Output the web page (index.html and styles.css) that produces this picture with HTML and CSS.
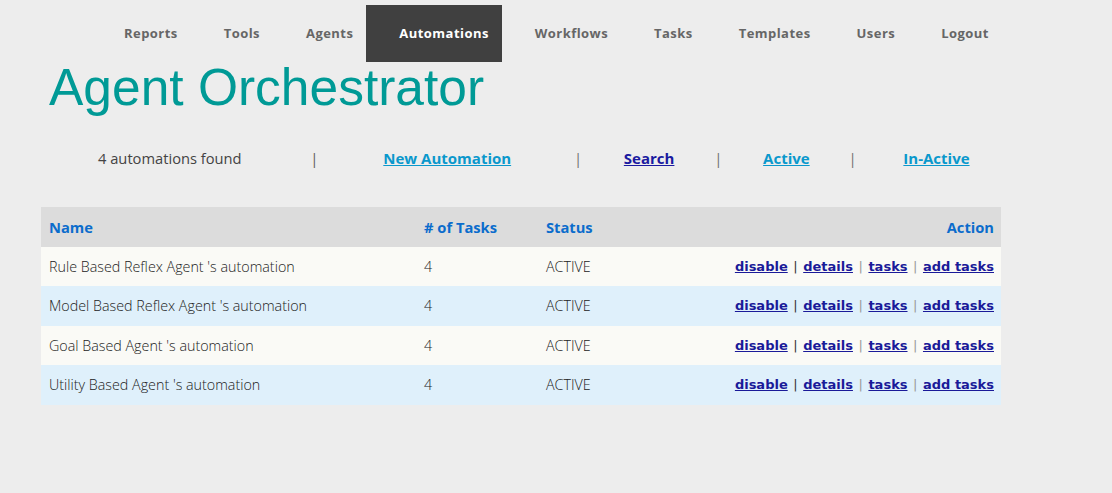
FILE: index.html
```html
<!DOCTYPE html>
<html>
<head>
<meta charset="utf-8">
<link rel="stylesheet" href="styles.css">
</head>
<body>
<div class="page">
  <nav class="nav">
    <a class="nav-item" href="#">Reports</a>
    <a class="nav-item" href="#">Tools</a>
    <a class="nav-item" href="#">Agents</a>
    <a class="nav-item active" href="#">Automations</a>
    <a class="nav-item" href="#">Workflows</a>
    <a class="nav-item" href="#">Tasks</a>
    <a class="nav-item" href="#">Templates</a>
    <a class="nav-item" href="#">Users</a>
    <a class="nav-item" href="#">Logout</a>
  </nav>
  <h1 class="title">Agent Orchestrator</h1>
  <div class="toolbar">
    <span class="count">4 automations found</span>
    <span class="sep s1">|</span>
    <a class="tlink l1" href="#">New Automation</a>
    <span class="sep g s2">|</span>
    <a class="tlink visited l2" href="#">Search</a>
    <span class="sep g s3">|</span>
    <a class="tlink l3" href="#">Active</a>
    <span class="sep g s4">|</span>
    <a class="tlink l4" href="#">In-Active</a>
  </div>
  <table class="grid">
    <thead>
      <tr><th class="c-name">Name</th><th class="c-tasks"># of Tasks</th><th class="c-status">Status</th><th class="c-action">Action</th></tr>
    </thead>
    <tbody>
      <tr class="odd"><td>Rule Based Reflex Agent 's automation</td><td>4</td><td>ACTIVE</td><td class="c-action"><a href="#">disable</a> <span class="bar">|</span> <a href="#">details</a> <span class="bar g">|</span> <a href="#">tasks</a> <span class="bar g">|</span> <a href="#">add tasks</a></td></tr>
      <tr class="even"><td>Model Based Reflex Agent 's automation</td><td>4</td><td>ACTIVE</td><td class="c-action"><a href="#">disable</a> <span class="bar">|</span> <a href="#">details</a> <span class="bar g">|</span> <a href="#">tasks</a> <span class="bar g">|</span> <a href="#">add tasks</a></td></tr>
      <tr class="odd"><td>Goal Based Agent 's automation</td><td>4</td><td>ACTIVE</td><td class="c-action"><a href="#">disable</a> <span class="bar">|</span> <a href="#">details</a> <span class="bar g">|</span> <a href="#">tasks</a> <span class="bar g">|</span> <a href="#">add tasks</a></td></tr>
      <tr class="even"><td>Utility Based Agent 's automation</td><td>4</td><td>ACTIVE</td><td class="c-action"><a href="#">disable</a> <span class="bar">|</span> <a href="#">details</a> <span class="bar g">|</span> <a href="#">tasks</a> <span class="bar g">|</span> <a href="#">add tasks</a></td></tr>
    </tbody>
  </table>
</div>
</body>
</html>
```
FILE: styles.css
```css
html, body {
  margin: 0;
  padding: 0;
}
body {
  background: #ededed;
  font-family: "Open Sans", "Liberation Sans", sans-serif;
  color: #333;
  height: 493px;
  overflow: hidden;
}
.page {
  padding: 5px 0 0 0;
}
.nav {
  display: flex;
  align-items: stretch;
  height: 57px;
  padding-left: 91px;
}
.nav-item {
  display: flex;
  align-items: center;
  padding: 0 13px 2px 33px;
  font-weight: 700;
  font-size: 13px;
  letter-spacing: 0.45px;
  color: #666;
  text-decoration: none;
}
.nav-item.active {
  background: #404040;
  color: #fff;
}
.title {
  margin: -5px 0 0 49px;
  font-family: "Liberation Sans", Arial, sans-serif;
  font-weight: 400;
  font-size: 51.5px;
  line-height: 60px;
  color: #009a96;
}
.toolbar {
  display: flex;
  align-items: center;
  margin: 29px 0 0 98px;
  height: 24px;
  font-size: 14.7px;
}
.count {
  color: #444;
}
.sep {
  color: #555;
  font-size: 14px;
  font-weight: 400;
}
.sep.g { color: #6a6a6a; }
.s1 { margin-left: 69px; }
.l1 { margin-left: 65px; }
.s2 { margin-left: 63px; }
.l2 { margin-left: 42px; }
.s3 { margin-left: 40px; }
.l3 { margin-left: 41px; }
.s4 { margin-left: 39px; }
.l4 { margin-left: 47px; }
.tlink {
  font-weight: 700;
  font-size: 15px;
  color: #0a98cc;
  text-decoration: underline;
}
.tlink.visited {
  color: #1a1aa0;
}
.grid {
  margin: 37px 0 0 41px;
  width: 960px;
  border-collapse: collapse;
  font-size: 14.3px;
}
.grid tr {
  height: 39.5px;
}
.grid th {
  background: #dcdcdc;
  color: #0b6ccc;
  font-weight: 700;
  font-size: 14.7px;
  text-align: left;
  padding: 0 7px 0 8px;
}
.grid td {
  padding: 0 7px 0 8px;
  color: #222;
  font-weight: 300;
}
.grid .c-name { width: 360px; }
.grid .c-tasks { width: 107px; }
.grid .c-status { width: 120px; }
.grid .c-action { text-align: right; }
.grid tr.odd td { background: #fafaf6; }
.grid tr.even td { background: #dff0fb; }
.grid td.c-action {
  font-family: "DejaVu Sans", Verdana, sans-serif;
  font-size: 13px;
  font-weight: 700;
}
.grid td.c-action a {
  color: #1a1a99;
  text-decoration: underline;
}
.bar {
  font-weight: 400;
  color: #333;
  margin: 0 1px;
}
.bar.g {
  color: #999;
}
```
